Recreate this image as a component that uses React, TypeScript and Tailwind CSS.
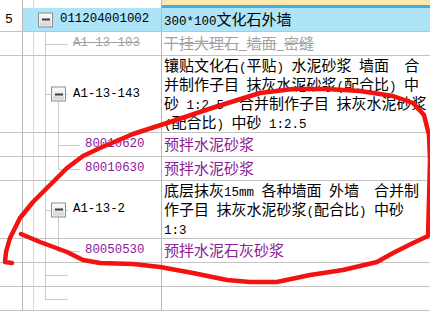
import clsx from 'clsx';

type Seg = 'full' | 'top' | 'bottom';

type Tree = {
  v11?: Seg;
  v24?: Seg;
  h11?: boolean;
  h24?: boolean;
  box?: 'l0' | 'l1';
};

type Row = {
  num?: string;
  code?: string;
  level?: 0 | 1 | 2;
  kind?: 'normal' | 'deleted' | 'material';
  lines?: string[];
  tree: Tree;
  selected?: boolean;
};

const rows: Row[] = [
  { num: '5', code: '011204001002', level: 0, lines: ['300*100文化石外墙'], tree: { box: 'l0', v11: 'bottom' }, selected: true },
  { code: 'A1-13-103', level: 1, kind: 'deleted', lines: ['干挂大理石 墙面 密缝'], tree: { v11: 'full', h11: true } },
  {
    code: 'A1-13-143',
    level: 1,
    lines: [
      '镶贴文化石(平贴) 水泥砂浆 墙面  合',
      '并制作子目 抹灰水泥砂浆(配合比) 中',
      '砂 1:2.5  合并制作子目 抹灰水泥砂浆',
      '(配合比) 中砂 1:2.5',
    ],
    tree: { v11: 'full', h11: true, box: 'l1', v24: 'bottom' },
  },
  { code: '80010620', level: 2, kind: 'material', lines: ['预拌水泥砂浆'], tree: { v11: 'full', v24: 'full', h24: true } },
  { code: '80010630', level: 2, kind: 'material', lines: ['预拌水泥砂浆'], tree: { v11: 'full', v24: 'top', h24: true } },
  {
    code: 'A1-13-2',
    level: 1,
    lines: ['底层抹灰15mm 各种墙面 外墙  合并制', '作子目 抹灰水泥砂浆(配合比) 中砂', '1:3'],
    tree: { v11: 'full', h11: true, box: 'l1', v24: 'bottom' },
  },
  { code: '80050530', level: 2, kind: 'material', lines: ['预拌水泥石灰砂浆'], tree: { v11: 'full', v24: 'top', h24: true } },
  { tree: { v11: 'full', h11: true } },
  { tree: { v11: 'top', h11: true } },
];

const segClass: Record<Seg, string> = {
  full: 'top-0 bottom-0',
  top: 'top-0 bottom-1/2',
  bottom: 'top-1/2 bottom-0',
};

// ASCII runs render half-width, like the original bitmap font
function Mixed({ text }: { text: string }) {
  const parts = text.split(/([\x00-\x7f]+)/).filter(Boolean);
  return (
    <>
      {parts.map((p, i) =>
        /^[\x00-\x7f]+$/.test(p) ? (
          <span key={i} className="font-['Liberation_Mono',monospace] text-[12.5px] whitespace-pre">
            {p}
          </span>
        ) : (
          <span key={i}>{p}</span>
        )
      )}
    </>
  );
}

function MinusBox({ className }: { className: string }) {
  return (
    <span
      className={clsx(
        'absolute top-1/2 -translate-y-1/2 w-[15px] h-[15px] border border-[#8e8e8e] bg-gradient-to-b from-white to-[#d2d2d2] flex items-center justify-center shadow-[inset_0_0_0_1px_#f4f4f4]',
        className
      )}
    >
      <span className="w-[8px] h-[2px] bg-[#3c3c3c]" />
    </span>
  );
}

function TreeLines({ t }: { t: Tree }) {
  return (
    <>
      {t.v11 && <span className={clsx('absolute left-[11px] w-px bg-[#cacaca]', segClass[t.v11])} />}
      {t.v24 && <span className={clsx('absolute left-[24px] w-px bg-[#cacaca]', segClass[t.v24])} />}
      {t.h11 && <span className="absolute left-[11px] top-1/2 w-[23px] h-px bg-[#cacaca]" />}
      {t.h24 && <span className="absolute left-[24px] top-1/2 w-[22px] h-px bg-[#cacaca]" />}
      {t.box === 'l0' && <MinusBox className="left-[4px]" />}
      {t.box === 'l1' && <MinusBox className="left-[17px]" />}
    </>
  );
}

const codePad = { 0: 'pl-[26px]', 1: 'pl-[39px]', 2: 'pl-[51px]' };

function GridRow({ r }: { r: Row }) {
  const tone =
    r.kind === 'deleted' ? 'text-[#a2a2a2] line-through' : r.kind === 'material' ? 'text-[#8b2196]' : 'text-black';
  return (
    <div className="flex border-b border-[#c3c3c3]">
      <div className="w-[23px] shrink-0 border-r border-[#b8b8b8] bg-white flex items-center pl-[5px] font-['Liberation_Mono',monospace] text-[13px]">
        {r.num}
      </div>
      <div className={clsx('w-[139px] shrink-0 flex border-r border-[#b8b8b8]', r.selected && 'bg-[#ade4f7]')}>
        <div className="w-[11px] shrink-0 border-r border-[#d8d8d8]" />
        <div className="relative flex-1 flex items-center">
          <TreeLines t={r.tree} />
          {r.code && (
            <span
              className={clsx(
                "font-['Liberation_Mono',monospace] text-[12.4px] whitespace-pre",
                codePad[r.level ?? 0],
                tone
              )}
            >
              {r.code}
            </span>
          )}
        </div>
      </div>
      <div
        className={clsx(
          'flex-1 min-h-[23px] pl-[2px] flex flex-col justify-center whitespace-nowrap',
          tone,
          r.selected && 'bg-[#ade4f7]'
        )}
      >
        {r.lines?.map((l, i) => (
          <div key={i} className="h-[19px] leading-[18px]">
            <Mixed text={l} />
          </div>
        ))}
      </div>
    </div>
  );
}

export default function App() {
  return (
    <div className="relative w-[430px] h-[311px] overflow-hidden bg-white font-['Noto_Sans_CJK_SC',sans-serif] text-[15px]">
      {/* header strip */}
      <div className="flex h-[8px]">
        <div className="w-[23px] shrink-0 border-r border-[#b8b8b8]" />
        <div className="w-[139px] shrink-0 flex border-r border-[#b8b8b8]">
          <div className="w-[11px] shrink-0 border-r border-[#d8d8d8]" />
        </div>
        <div className="flex-1 flex flex-col">
          <div className="h-[5px] bg-[#fde8b0]" />
          <div className="h-[3px] bg-[#45add9]" />
        </div>
      </div>

      {rows.map((r, i) => (
        <GridRow key={i} r={r} />
      ))}

      {/* next row, highlighted */}
      <div className="flex h-[20px]">
        <div className="w-[23px] shrink-0 border-r border-[#b8b8b8]" />
        <div className="flex-1 bg-[#ade4f7]" />
      </div>

      {/* red hand-drawn annotation */}
      <svg className="absolute inset-0 pointer-events-none" width="430" height="311" viewBox="0 0 430 311">
        <polyline
          fill="none"
          stroke="#f3120f"
          strokeWidth="4.5"
          strokeLinecap="round"
          strokeLinejoin="round"
          points="12,263 5,262 6,252 10,238 20,218 33,202 50,185 67,168 83,156 100,148 133,134 167,123 215,107 260,93 293,89 327,89 360,91 393,96 413,103 424,115 429,135 430,160 429,200 428,236 413,243 393,253 377,262 343,270 310,275 277,282 250,282 227,280 193,273 160,267 133,264 100,263 83,260 67,252 40,242 21,234"
        />
      </svg>
    </div>
  );
}
